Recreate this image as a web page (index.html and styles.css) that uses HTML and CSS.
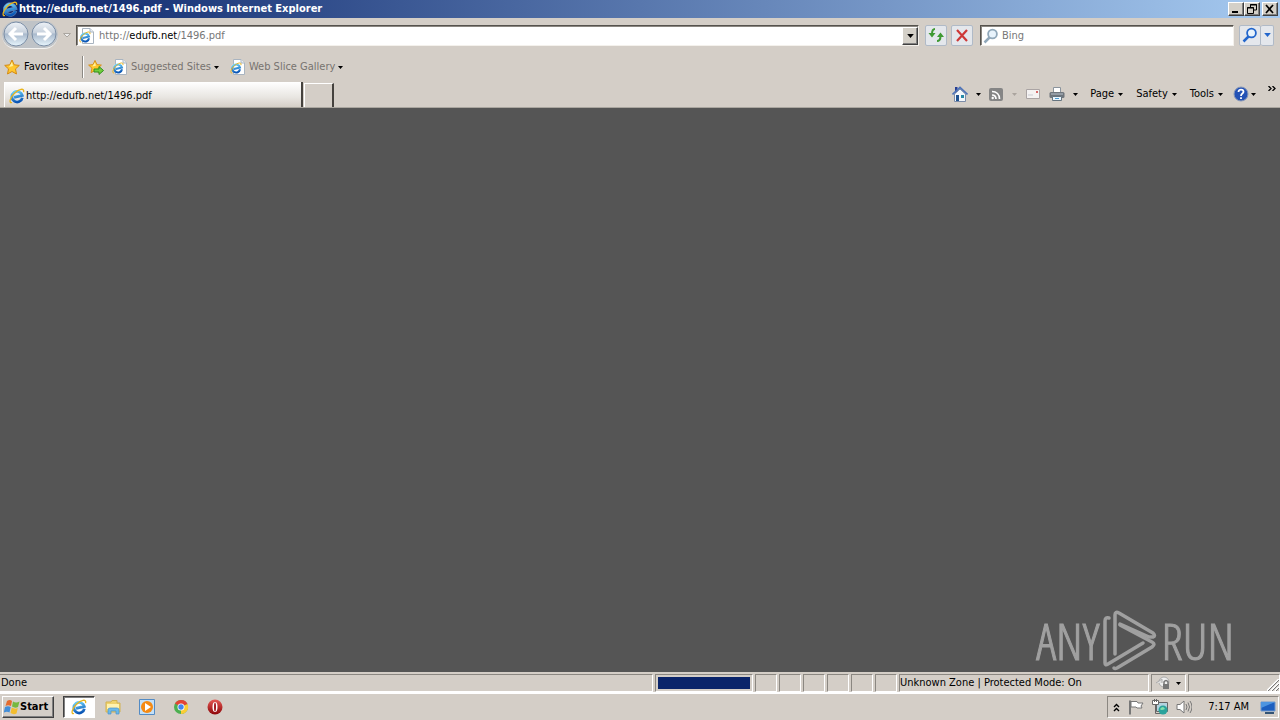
FILE: index.html
```html
<!DOCTYPE html>
<html lang="en">
<head>
<meta charset="utf-8">
<title>http://edufb.net/1496.pdf - Windows Internet Explorer</title>
<link rel="stylesheet" href="styles.css">
</head>
<body>
<svg class="defs" aria-hidden="true">
  <defs>
    <linearGradient id="blue" x2="0" y2="1"><stop stop-color="#65c9f5"/><stop offset="1" stop-color="#0a55b5"/></linearGradient>
    <linearGradient id="orb" x2="0" y2="1"><stop stop-color="#eef2f7"/><stop offset=".45" stop-color="#c6d0dc"/><stop offset=".5" stop-color="#a9b9cc"/><stop offset="1" stop-color="#e8f6fd"/></linearGradient>
    <linearGradient id="red" x2="0" y2="1"><stop stop-color="#e65a55"/><stop offset="1" stop-color="#8d0508"/></linearGradient>
    <symbol id="ie" viewBox="0 0 16 16">
      <g transform="rotate(-14 8 9)">
        <path d="M13 11A5.300 5.300 0 1 1 13.600 8.700H5" fill="none" stroke="#fff" stroke-opacity=".4" stroke-width="3.600"/>
        <path d="M13 11A5.300 5.300 0 1 1 13.500 8.700H5" fill="none" stroke="url(#blue)" stroke-width="2.800"/>
      </g>
      <path d="M3 14.500C-.5 15.500 1 9.500 5.500 5.200C9.500 1.300 15.800-.8 14.600 4.200" fill="none" stroke="#e9b51d" stroke-width="1.300"/>
    </symbol>
    <symbol id="iepage" viewBox="0 0 16 16">
      <path d="M3.500.5H11L14.500 4V15.500H3.500Z" fill="#fff" stroke="#a9b4c0"/><path d="M11 .5V4H14.500" fill="#e6edf5" stroke="#a9b4c0"/>
      <svg x="0" y="3" width="12" height="12"><use href="#ie"/></svg>
    </symbol>
    <symbol id="star" viewBox="0 0 16 16"><path d="M8 1L10.200 5.800L15.300 6.400L11.500 9.900L12.500 15L8 12.500L3.500 15L4.500 9.900L.7 6.400L5.800 5.800Z" fill="#ffc72e" stroke="#d58a12"/><path d="M8 3L9 7L5 8Z" fill="#fff2a0"/></symbol>
    <symbol id="lens" viewBox="0 0 16 16"><path d="M6.500 9.500L1.500 14.500" stroke="currentColor" stroke-width="2.500"/><circle cx="9.500" cy="6" r="4.400" fill="#e8f3fc" stroke="currentColor" stroke-width="1.800"/></symbol>
    <symbol id="down" viewBox="0 0 5 3"><path d="M0 0H5L2.500 3Z" fill="currentColor"/></symbol>
  </defs>
</svg>

<header class="titlebar">
  <svg class="icon"><use href="#ie"/></svg>
  <h1 class="title">http://edufb.net/1496.pdf - Windows Internet Explorer</h1>
  <div class="window-buttons">
    <button class="win" aria-label="Minimize"><svg viewBox="0 0 12 10"><path d="M2 8H8" stroke="#000" stroke-width="2"/></svg></button>
    <button class="win" aria-label="Restore"><svg viewBox="0 0 12 10"><path d="M4.500 3V.500H10.500V6H8M4 1H11M1.500 3.500H7.500V9.500H1.500ZM1 4H8" fill="none" stroke="#000"/></svg></button>
    <button class="win close" aria-label="Close"><svg viewBox="0 0 12 10"><path d="M2 1L9 9M9 1L2 9" stroke="#000" stroke-width="1.700"/></svg></button>
  </div>
</header>

<nav class="navbar" aria-label="Navigation">
  <div class="travel">
    <button class="orb" aria-label="Back"><svg viewBox="0 0 26 26"><circle cx="13" cy="13" r="12" fill="url(#orb)" stroke="#7b8ea6"/><path d="M20 13H8M13 7L7 13L13 19" fill="none" stroke="#fff" stroke-width="3"/></svg></button>
    <button class="orb" aria-label="Forward"><svg viewBox="0 0 26 26"><circle cx="13" cy="13" r="12" fill="url(#orb)" stroke="#7b8ea6"/><path d="M6 13H18M13 7L19 13L13 19" fill="none" stroke="#fff" stroke-width="3"/></svg></button>
  </div>
  <button class="flat recent" aria-label="Recent pages"><svg viewBox="0 0 8 5"><path d="M.5 .5H7.500L4 4Z" fill="#eee" stroke="#aaa6a0"/></svg></button>
  <div class="field address">
    <svg class="icon"><use href="#iepage"/></svg>
    <a class="url" href="#">http://<span class="domain">edufb.net</span>/1496.pdf</a>
    <button class="win drop" aria-label="Show addresses"><svg class="down"><use href="#down"/></svg></button>
  </div>
  <button class="tool" aria-label="Refresh"><svg class="icon" viewBox="0 0 16 16"><path d="M7 2C4.500 2 4 4 4 7M9 14C12 14 12.500 12 12.500 9" fill="none" stroke="#3f9a33" stroke-width="2"/><path d="M.5 6H7.500L4 10.500ZM9 10L12.500 5.500L16 10Z" fill="#3f9a33"/></svg></button>
  <button class="tool" aria-label="Stop"><svg class="icon" viewBox="0 0 16 16"><path d="M3 3L13 14M13 3L3 14" stroke="#ce3838" stroke-width="2.200"/></svg></button>
  <div class="field search">
    <svg class="icon glass"><use href="#lens"/></svg>
    <input type="text" placeholder="Bing" aria-label="Search">
  </div>
  <div class="search-go">
    <button class="tool go" aria-label="Search Bing"><svg class="icon"><use href="#lens"/></svg></button>
    <button class="tool more" aria-label="Search options"><svg class="down"><use href="#down"/></svg></button>
  </div>
</nav>

<div class="favorites">
  <button class="flat fav"><svg class="icon"><use href="#star"/></svg>Favorites</button>
  <button class="flat add" aria-label="Add to Favorites Bar"><svg class="icon" viewBox="0 0 16 16"><use href="#star" width="14" height="15"/><path d="M6 10H11V7.500L15.500 11.500L11 15.500V13H6Z" fill="#72ce3d" stroke="#318f20"/></svg></button>
  <button class="flat dim"><svg class="icon"><use href="#iepage"/></svg>Suggested Sites<svg class="down"><use href="#down"/></svg></button>
  <button class="flat dim"><svg class="icon"><use href="#iepage"/></svg>Web Slice Gallery<svg class="down"><use href="#down"/></svg></button>
</div>

<div class="tabrow">
  <button class="tab"><svg class="icon"><use href="#ie"/></svg>http://edufb.net/1496.pdf</button>
  <button class="newtab" aria-label="New tab"></button>
  <div class="commands">
    <button class="flat split home" aria-label="Home"><svg class="icon" viewBox="0 0 16 16"><path d="M2.500 8V15.500H13.500V8L8 3Z" fill="#f4f7fb" stroke="#7c8ca8"/><path d="M3 1H5.500V5L3 7Z" fill="#263d93"/><path d="M.5 8.500L8 1.500L15.500 8.500" fill="none" stroke="#4d73b8" stroke-width="1.700"/><path d="M4 9H7V15H4Z" fill="#1f5290"/><path d="M9 9H12V12H9Z" fill="#298aa7"/></svg><svg class="down"><use href="#down"/></svg></button>
    <button class="flat split feeds" aria-label="Feeds"><svg class="icon" viewBox="0 0 16 16"><rect x="1" y="2" width="14" height="13" rx="2" fill="#858585"/><path d="M4 5.500C8.500 5.500 11.500 8.500 11.500 13M4 9C6.500 9 8 10.500 8 13" fill="none" stroke="#fff" stroke-width="1.700"/><circle cx="4.700" cy="12" r="1.200" fill="#fff"/></svg><svg class="down pale"><use href="#down"/></svg></button>
    <button class="flat mail" aria-label="Read mail"><svg class="icon" viewBox="0 0 16 16"><path d="M1.500 3.500H14.500V12.500H1.500Z" fill="#f4f2f2" stroke="#aaa4a4"/><path d="M3 9H8" stroke="#c9cbd2"/><path d="M11 5H13V7H11Z" fill="#d66a6a"/></svg></button>
    <button class="flat split print" aria-label="Print"><svg class="icon" viewBox="0 0 16 16"><path d="M4.500 1.500H11.500V7H4.500Z" fill="#fff" stroke="#8b949d"/><rect x=".5" y="6" width="15" height="6" rx="1.500" fill="#6e757c"/><path d="M2 8H14" stroke="#b9c4ce"/><path d="M3.500 10.500H12.500V14.500H3.500Z" fill="#eaf6ff" stroke="#65747f"/><path d="M6 12.500H10" stroke="#4d9bd0"/></svg><svg class="down"><use href="#down"/></svg></button>
    <button class="flat menu">Page<svg class="down"><use href="#down"/></svg></button>
    <button class="flat menu">Safety<svg class="down"><use href="#down"/></svg></button>
    <button class="flat menu">Tools<svg class="down"><use href="#down"/></svg></button>
    <button class="flat help" aria-label="Help"><svg class="icon" viewBox="0 0 16 16"><circle cx="8" cy="8" r="7" fill="#2452b5" stroke="#8898b8"/><path d="M5.500 6C5.500 2.800 10.500 3 10.500 5.800C10.500 7.700 8 7.500 8 10M8 11.200V13" fill="none" stroke="#fff" stroke-width="1.800"/></svg><svg class="down"><use href="#down"/></svg></button>
    <button class="flat chevron" aria-label="More commands"><svg viewBox="0 0 8 5"><path d="M.5 0L3 2.500L.5 5M4.500 0L7 2.500L4.500 5" fill="none" stroke="#000" stroke-width="1.300"/></svg></button>
  </div>
</div>

<main class="page">
  <div class="watermark">
    <span>ANY</span>
    <svg viewBox="0 0 56 62" aria-hidden="true"><g fill="none" stroke="#a0a0a0" stroke-width="3.500" stroke-linecap="round" stroke-linejoin="round"><path d="M7 8Q3 7 3 11V53Q3 56 6 54L41 33"/><path d="M13 44V5Q13 1 17 3L51 23Q54 26 51 27L47 27L18 14"/><path d="M18 15L50 32Q54 34 50 37L15 58Q13 59 12 58"/></g></svg>
    <span>RUN</span>
  </div>
</main>

<footer class="status">
  <div class="cell done">Done</div>
  <div class="cell progress"><div class="bar"></div></div>
  <div class="cell small"></div><div class="cell small"></div><div class="cell small"></div><div class="cell small"></div><div class="cell small"></div><div class="cell small"></div>
  <div class="cell zone">Unknown Zone | Protected Mode: On</div>
  <div class="cell privacy"><svg class="icon" viewBox="0 0 16 16"><circle cx="9" cy="7" r="5" fill="#eee" stroke="#aaa"/><path d="M1 8L7 4V8" fill="#ddd" stroke="#aaa"/><path d="M9 9V7Q11 4 13 7V9" fill="none" stroke="#777" stroke-width="1.500"/><path d="M8 9H14V14H8Z" fill="#777"/></svg><svg class="down"><use href="#down"/></svg></div>
  <div class="cell zoom"><svg class="grip" viewBox="0 0 12 12"><path d="M0 12L12 0M4 12L12 4M8 12L12 8" stroke="#fff" stroke-width="2"/><path d="M1 12L12 1M5 12L12 5M9 12L12 9" stroke="#777"/></svg></div>
</footer>

<div class="taskbar">
  <button class="start"><svg class="icon" viewBox="0 0 16 16"><path d="M3 2Q6 0 8 2L7 7Q4 5.500 1.500 7Z" fill="#e46b2e"/><path d="M9 2.500Q12 4.500 15.500 2.500L14 8Q11 9.500 8 7.500Z" fill="#76b83f"/><path d="M1 8Q4 6.500 6.700 8L5.500 13.500Q3 12-.2 13.500Z" fill="#438ed8"/><path d="M7.800 8.500Q11 10.500 13.800 9L12.500 14.500Q9.500 16 6.500 14Z" fill="#f3bd2e"/></svg>Start</button>
  <button class="task active" aria-label="Internet Explorer"><svg class="icon"><use href="#ie"/></svg></button>
  <button class="task" aria-label="Windows Explorer"><svg class="icon" viewBox="0 0 16 16"><path d="M1 3H6L7 1.500H12V4H15V13H1Z" fill="#f0d36d" stroke="#d1b252"/><path d="M2 5H14V10H2Z" fill="#fff2af"/><path d="M3 15V11Q3 9 5 9H12Q14 9 14 11V15H11V12H6V15Z" fill="#6bb9e9" stroke="#4b94ca" stroke-width=".7"/></svg></button>
  <button class="task" aria-label="Media Player"><svg class="icon" viewBox="0 0 16 16"><path d="M.5 .5H15.500V15.500H.5Z" fill="#c3e0f8" stroke="#538bc4"/><circle cx="8" cy="8" r="6" fill="#f58a13"/><path d="M6 4L12 8L6 12Z" fill="#fff"/></svg></button>
  <button class="task" aria-label="Chrome"><svg class="icon" viewBox="0 0 16 16"><circle cx="8" cy="8" r="7" fill="#4caf50"/><path d="M8 8L2 4.500A7 7 0 0 1 14.500 5Z" fill="#e34435"/><path d="M8 8L14.500 5A7 7 0 0 1 8 15Z" fill="#fbcd35"/><circle cx="8" cy="8" r="3.500" fill="#fff"/><circle cx="8" cy="8" r="2.700" fill="#4286ef"/></svg></button>
  <button class="task" aria-label="Opera"><svg class="icon" viewBox="0 0 16 16"><circle cx="8" cy="8" r="7.500" fill="url(#red)"/><ellipse cx="8" cy="8" rx="2.500" ry="5" fill="#fff"/><ellipse cx="8" cy="8" rx="1" ry="4.500" fill="#a31b20"/></svg></button>
  <div class="tray">
    <svg class="up" viewBox="0 0 7 9"><path d="M1 4L3.500 1.500L6 4M1 8L3.500 5.500L6 8" fill="none" stroke="#000" stroke-width="1.400"/></svg>
    <svg class="icon" viewBox="0 0 16 16"><path d="M2 1.500V15.500" stroke="#777" stroke-width="2"/><path d="M3 2.500H9L10 4H15L13 7L14 9H9L8 8H3Z" fill="#fff" stroke="#777"/></svg>
    <svg class="icon" viewBox="0 0 16 16"><path d="M4.500 3.500H15.500V12.500H4.500Z" fill="#b3d3df" stroke="#666"/><path d="M3.500 5V14.500H9" fill="none" stroke="#666"/><path d="M.5 1.500H6.500V5.500H.5Z" fill="#fff" stroke="#666"/><path d="M2.500 0V3M4.500 0V3" stroke="#666"/><circle cx="11" cy="11" r="4.500" fill="#2aa39c"/><path d="M8 10Q11 6 13 10Q9 12 8 10" fill="#82dfab"/></svg>
    <svg class="icon" viewBox="0 0 16 16"><path d="M1 5.500H4L8 2V14L4 10.500H1Z" fill="#fff" stroke="#777"/><path d="M10 5Q12 8 10 11M12 3.500Q15 8 12 12.500M14 2Q18 8 14 14" fill="none" stroke="#777"/></svg>
    <time class="clock">7:17 AM</time>
    <svg class="icon" viewBox="0 0 16 16"><path d="M1 3H15V12H1Z" fill="#1d5fbf" stroke="#7197c9"/><path d="M1 3H15L1 9Z" fill="#4e95e0"/><path d="M5 14H14" stroke="#345475" stroke-width="2"/></svg>
  </div>
</div>
</body>
</html>
```

FILE: styles.css
```css
* { box-sizing: border-box; }
body {
  margin: 0;
  height: 100vh;
  display: flex;
  flex-direction: column;
  overflow: hidden;
  background: #d4cec7;
  color: #000;
  font: 11px/14px "DejaVu Sans Condensed", "DejaVu Sans", sans-serif;
}
button, input { font: inherit; color: inherit; padding: 0; margin: 0; }
button { display: flex; align-items: center; flex: none; border: 0; background: none; white-space: nowrap; }
svg { display: block; flex: none; }
.defs { position: absolute; width: 0; height: 0; }
.icon { width: 16px; height: 16px; }
.down { width: 5px; height: 3px; }
.pale { color: #aaa49e; }

.titlebar {
  display: flex; align-items: center; gap: 1px;
  height: 18px; padding: 0 2px;
  background: linear-gradient(90deg, #0a246a, #a6caf0);
  color: #fff;
}
.title { flex: 1; margin: 0; font-size: 11px; line-height: 18px; font-weight: 700; white-space: nowrap; }
.window-buttons { display: flex; }
.win {
  justify-content: center; width: 16px; height: 14px;
  background: #d4d0c8; border: 1px solid; border-color: #fff #404040 #404040 #fff;
  box-shadow: inset -1px -1px #808080;
}
.win svg { width: 12px; height: 10px; }
.close { margin-left: 2px; }

.navbar { display: flex; align-items: center; height: 34px; padding: 0 6px 0 2px; }
.travel { display: flex; gap: 2px; padding: 0 1px 1px; border-radius: 14px; background: #bfc3c7; border-bottom: 1px solid #f5f4f2; }
.orb svg { width: 26px; height: 26px; }
.recent { padding: 0 5px; }
.recent svg { width: 8px; height: 5px; }
.field {
  display: flex; align-items: center; min-width: 0; height: 21px; background: #fff;
  border: 1px solid; border-color: #55524d #f4f1ec #f4f1ec #55524d; box-shadow: inset 1px 1px #8b8781;
}
.address { flex: 1; gap: 4px; padding: 1px 0 0 2px; margin-right: 6px; }
.url { flex: 1; color: #777; text-decoration: none; }
.domain { color: #000; }
.win.drop { height: 18px; }
.win.drop .down, .more .down { width: 7px; height: 4px; }
.tool { justify-content: center; width: 22px; height: 21px; border: 1px solid #b0bac7; border-radius: 2px; background: #e4e7ec; }
.tool + .tool { margin-left: 4px; }
.search { width: 254px; gap: 3px; padding: 1px 2px 0; margin: 0 5px 0 7px; }
.search input { flex: 1; min-width: 0; border: 0; outline: 0; background: transparent; }
.search input::placeholder { color: #777; opacity: 1; }
.glass { color: #91a8ba; }
.search-go { display: flex; color: #2266cc; }
.search-go .more { width: 13px; margin-left: 0; border-left: 0; }

.favorites { display: flex; align-items: center; height: 30px; padding: 0 4px; }
.fav { gap: 4px; width: 79px; height: 22px; border-right: 1px solid #8b8883; box-shadow: 1px 0 #fff; }
.add { margin-left: 5px; }
.dim { gap: 3px; margin-left: 8px; color: #77736f; }
.dim + .dim { margin-left: 11px; }
.dim .down { color: #000; }

.tabrow { display: flex; align-items: flex-end; height: 26px; padding: 0 4px; border-bottom: 1px solid #aaa69f; }
.tab {
  width: 299px; height: 25px; padding: 3px 4px 0; gap: 1px;
  background: linear-gradient(#fff, #e9e6e2 60%, #d4cec7);
  border-right: 2px solid #45423e; border-left: 1px solid #fff;
}
.newtab { width: 30px; height: 24px; margin-left: 1px; border: 1px solid #fff; border-right: 2px solid #45423e; border-bottom: 0; }
.commands { display: flex; align-items: center; flex: 1; justify-content: flex-end; height: 26px; }
.split { gap: 8px; }
.feeds { margin-left: 7px; }
.mail { margin-left: 8px; }
.print { margin-left: 8px; }
.menu { gap: 4px; margin-left: 12px; }
.menu + .menu { margin-left: 13px; }
.help { gap: 2px; margin-left: 10px; }
.chevron { margin-left: 12px; height: 24px; align-items: flex-start; padding-top: 4px; }
.chevron svg { width: 8px; height: 5px; }

.page { flex: 1; display: flex; justify-content: flex-end; align-items: flex-end; min-height: 0; background: #555; }
.watermark {
  display: flex; align-items: center; gap: 3px; margin-right: 46px;
  color: #a0a0a0; font: 300 50px/62px "Open Sans Condensed Light", "Open Sans Condensed", "Liberation Sans Narrow", sans-serif;
  -webkit-text-stroke: 1px #a0a0a0;
}
.watermark svg { width: 56px; height: 62px; }

.status { display: flex; height: 21px; padding-top: 2px; gap: 2px; border-bottom: 1px solid #fff; }
.cell {
  display: flex; align-items: center; flex: none; height: 18px; white-space: nowrap;
  border: 1px solid; border-color: #8b8781 #fff #fff #8b8781;
}
.done { flex: 1; border-left: 0; padding-left: 1px; }
.progress { width: 98px; padding: 2px; }
.bar { flex: 1; height: 12px; background: #0a246a; }
.small { width: 22px; }
.zone { width: 250px; }
.privacy { width: 35px; padding-left: 3px; gap: 5px; }
.zoom { width: 92px; justify-content: flex-end; align-items: flex-end; }
.grip { width: 12px; height: 12px; }

.taskbar { display: flex; align-items: center; height: 27px; padding: 0 1px 0 2px; gap: 2px; border-top: 1px solid #fff; }
.start {
  width: 52px; height: 22px; gap: 0; padding-left: 1px; margin-right: 7px;
  font-weight: 700;
  border: 1px solid; border-color: #fff #404040 #404040 #fff; box-shadow: inset -1px -1px #808080;
}
.task { width: 32px; height: 22px; justify-content: center; }
.active { background: #fff; border: 1px solid; border-color: #404040 #fff #fff #404040; box-shadow: inset 1px 1px #808080; }
.tray { display: flex; align-items: center; gap: 8px; height: 22px; margin-left: auto; padding: 0 2px 0 5px; border: 1px solid; border-color: #8b8781 #fff #fff #8b8781; }
.up { width: 7px; height: 9px; }
.clock { margin: 0 3px 0 8px; }
```
